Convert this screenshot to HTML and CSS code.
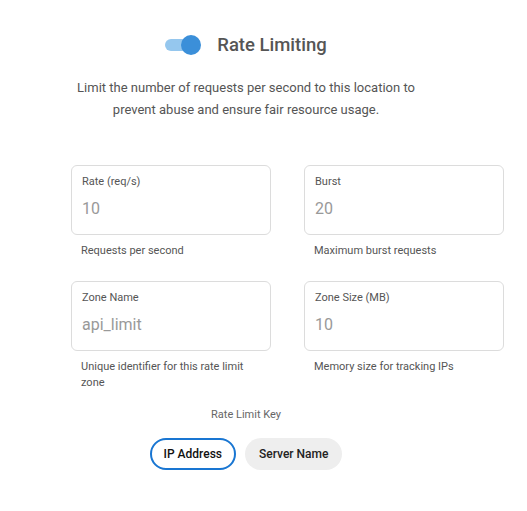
FILE: index.html
```html
<!DOCTYPE html>
<html>
<head>
<meta charset="utf-8">
<link rel="stylesheet" href="styles.css">
</head>
<body>
<div class="page">
  <div class="head">
    <span class="toggle"><span class="track"></span><span class="thumb"></span></span>
    <h2 class="title">Rate Limiting</h2>
  </div>
  <p class="desc">Limit the number of requests per second to this location to prevent abuse and ensure fair resource usage.</p>
  <div class="fields">
    <div class="field">
      <div class="box"><div class="label">Rate (req/s)</div><div class="value">10</div></div>
      <div class="helper">Requests per second</div>
    </div>
    <div class="field">
      <div class="box"><div class="label">Burst</div><div class="value">20</div></div>
      <div class="helper">Maximum burst requests</div>
    </div>
    <div class="field">
      <div class="box"><div class="label">Zone Name</div><div class="value">api_limit</div></div>
      <div class="helper">Unique identifier for this rate limit zone</div>
    </div>
    <div class="field">
      <div class="box"><div class="label">Zone Size (MB)</div><div class="value">10</div></div>
      <div class="helper">Memory size for tracking IPs</div>
    </div>
  </div>
  <div class="key">
    <div class="key-label">Rate Limit Key</div>
    <div class="chips">
      <span class="chip chip-active">IP Address</span>
      <span class="chip">Server Name</span>
    </div>
  </div>
</div>
</body>
</html>
```
FILE: styles.css
```css
html, body {
  margin: 0;
  padding: 0;
  background: #ffffff;
}
body {
  font-family: Roboto, "Liberation Sans", sans-serif;
  color: #555;
}
.page {
  width: 492px;
  padding-top: 31px;
}
.head {
  display: flex;
  justify-content: center;
  align-items: center;
  gap: 16px;
  height: 28px;
}
.toggle {
  position: relative;
  width: 36px;
  height: 20px;
  display: inline-block;
}
.track {
  position: absolute;
  left: 0;
  top: 4px;
  width: 34px;
  height: 12px;
  border-radius: 6px;
  background: #95c7ee;
}
.thumb {
  position: absolute;
  right: 0;
  top: 0;
  width: 20px;
  height: 20px;
  border-radius: 50%;
  background: #3b8fd9;
}
.title {
  margin: 0;
  font-size: 18.5px;
  font-weight: 500;
  color: #555;
  line-height: 28px;
}
.desc {
  width: 350px;
  margin: 18px auto 0;
  text-align: center;
  font-size: 13px;
  line-height: 22px;
  color: #555;
}
.fields {
  margin: 44px 0 0 71px;
  display: grid;
  grid-template-columns: 200px 200px;
  column-gap: 33px;
  row-gap: 22px;
}
.box {
  box-sizing: border-box;
  height: 70px;
  border: 1px solid #dcdcdc;
  border-radius: 6px;
  padding: 8px 10px 0;
}
.label {
  font-size: 11px;
  line-height: 16px;
  color: #555;
}
.value {
  margin-top: 9px;
  font-size: 16px;
  line-height: 20px;
  color: #999;
}
.helper {
  margin-top: 8px;
  padding: 0 10px;
  font-size: 11px;
  line-height: 16px;
  color: #555;
}
.key {
  margin-top: 16px;
  text-align: center;
}
.key-label {
  font-size: 11px;
  line-height: 16px;
  color: #666;
}
.chips {
  margin-top: 15px;
  display: flex;
  justify-content: center;
  gap: 9px;
}
.chip {
  box-sizing: border-box;
  height: 32px;
  padding: 0 12px;
  border: 2px solid transparent;
  border-radius: 16px;
  background: #eeeeee;
  font-size: 12px;
  font-weight: 500;
  line-height: 28px;
  color: #222;
}
.chip-active {
  background: #ffffff;
  border-color: #1976d2;
  color: #111;
}
```
